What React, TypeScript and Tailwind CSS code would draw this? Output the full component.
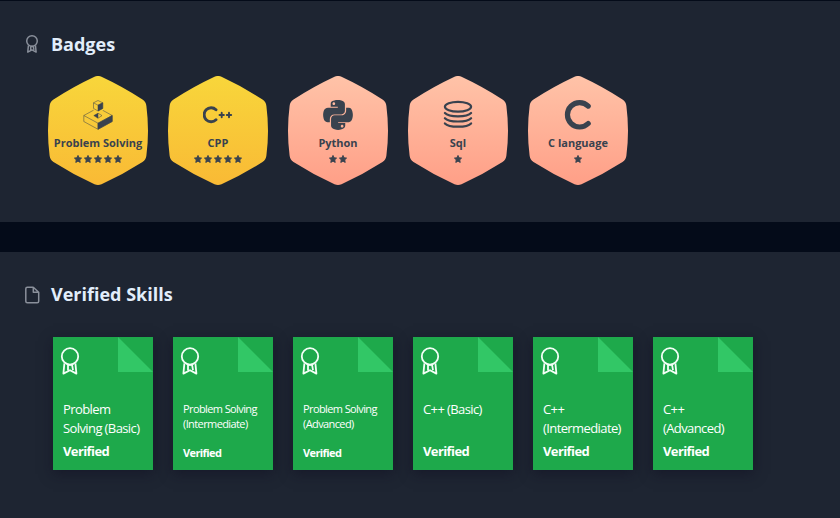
import type { ReactNode } from 'react';
import { FaPython } from 'react-icons/fa';

const INK = '#39424e';

function RibbonIcon({ className, strokeWidth }: { className: string; strokeWidth: number }) {
  return (
    <svg viewBox="0 0 20 28" className={className} fill="none" stroke="currentColor" strokeWidth={strokeWidth} strokeLinejoin="round">
      <circle cx="10" cy="9.4" r="8.2" />
      <path d="M4.4 16.4 3.4 26.6 10 23.2l6.4 3.4-1-10.2M8 17.6v5.6M12 17.6l1 5.6M8 17.8h4" />
    </svg>
  );
}

function FileIcon() {
  return (
    <svg viewBox="0 0 16 18" className="h-[18px] w-4 text-[#8a909b]" fill="none" stroke="currentColor" strokeWidth="1.5" strokeLinejoin="round">
      <path d="M9.300 1.300H3.300Q1.800 1.300 1.800 2.800v12.400q0 1.500 1.500 1.500h9.900q1.500 0 1.500-1.500V6.300L9.300 1.300v5h5.400" />
    </svg>
  );
}

function CubeIcon() {
  return (
    <svg viewBox="0 0 30 30" className="size-[30px]" fill="none" stroke={INK} strokeWidth="0.6" strokeOpacity="0.85" strokeLinejoin="round">
      <path d="M10.600 10.200.8 15.500v6L15 29.300l14.200-7.800v-6l-9.500-5.200M.8 15.500 15 23.200l14.200-7.700M15 23.200v6" />
      <path d="M15 23.200 29.200 15.500v6L15 29.300z" fill={INK} />
      <path d="m15 .5 4.700 2.300v5.600L15 11l-4.500-2.600V2.800zM10.500 2.800 15 5.200l4.700-2.400" />
      <path d="M15 5.200 19.700 2.800v5.600L15 11zM10.800 15.600 15 13.200v5z" fill={INK} />
      <path d="m15 13.200 4 2.400-4 2.600" />
    </svg>
  );
}

function CppIcon() {
  return (
    <svg viewBox="0 0 30 30" className="size-[30px]" fill="none" stroke={INK} strokeLinecap="round">
      <path d="M13 9.700a7 7 0 1 0 0 10.100" strokeWidth="2.900" />
      <path d="M16.500 15h4.400M18.700 12.800v4.400M23.800 15h4.400M26 12.800v4.400" strokeWidth="1.900" />
    </svg>
  );
}

function SqlIcon() {
  return (
    <svg viewBox="0 0 30 30" className="size-[30px]" fill="none" stroke={INK} strokeWidth="2.200" strokeLinecap="round">
      <ellipse cx="15" cy="6.700" rx="13.100" ry="4.900" />
      <path d="M1.900 13c4 4.400 22.200 4.400 26.200 0M1.900 18.200c4 4.400 22.200 4.400 26.200 0M1.900 23.400c4 4.400 22.200 4.400 26.200 0" />
    </svg>
  );
}

function CIcon() {
  return (
    <svg viewBox="0 0 30 30" className="size-[30px]" fill="none" stroke={INK} strokeWidth="5.200" strokeLinecap="round">
      <path d="M25.200 6.100a12.200 12.200 0 1 0 0 17.400" />
    </svg>
  );
}

function Star() {
  return (
    <svg viewBox="0 0 20 20" className="size-[8px]" fill={INK} stroke={INK} strokeWidth="2.200" strokeLinejoin="round">
      <path d="m10 1 2.800 5.900 6.200.8-4.600 4.400 1.200 6.600L10 15.400l-5.600 3.300 1.200-6.600L1 7.700l6.200-.8z" />
    </svg>
  );
}

type BadgeData = { name: string; stars: number; tone: 'gold' | 'bronze'; icon: ReactNode };

const badges: BadgeData[] = [
  { name: 'Problem Solving', stars: 5, tone: 'gold', icon: <CubeIcon /> },
  { name: 'CPP', stars: 5, tone: 'gold', icon: <CppIcon /> },
  { name: 'Python', stars: 2, tone: 'bronze', icon: <FaPython className="size-[34px] shrink-0" color={INK} /> },
  { name: 'Sql', stars: 1, tone: 'bronze', icon: <SqlIcon /> },
  { name: 'C language', stars: 1, tone: 'bronze', icon: <CIcon /> },
];

function Badge({ badge, id }: { badge: BadgeData; id: string }) {
  const gold = badge.tone === 'gold';
  return (
    <div className="relative h-[110px] w-[100px]">
      <svg viewBox="0 0 100 110" className="absolute inset-0 h-full w-full">
        <defs>
          <linearGradient id={id} x1="0" y1="0" x2="0" y2="1">
            <stop offset="0" stopColor={gold ? '#f8d63b' : '#ffc3a8'} />
            <stop offset="1" stopColor={gold ? '#f9ba35' : '#ff9f87'} />
          </linearGradient>
        </defs>
        <path
          fill={`url(#${id})`}
          d="M46.500 .800Q50-.900 53.500 .800Q75 10.800 94.500 23.600Q98 26 98.400 30Q101.600 55 98.400 79.500Q98 83.500 94.500 86Q75 98.500 53.500 108.300Q50 109.900 46.500 108.300Q25 98.500 5.500 86Q2 83.500 1.600 79.500Q-1.600 55 1.600 30Q2 26 5.500 23.600Q25 10.800 46.500 .800Z"
        />
      </svg>
      <div className="relative flex flex-col items-center pt-6 text-[#39424e]">
        <div className="flex h-[30px] items-center justify-center">{badge.icon}</div>
        <div className="mt-[5px] whitespace-nowrap text-[11px] leading-4 font-bold">{badge.name}</div>
        <div className="mt-[4px] flex gap-[1.8px]">
          {Array.from({ length: badge.stars }, (_, i) => (
            <Star key={i} />
          ))}
        </div>
      </div>
    </div>
  );
}

const skills = [
  { lines: ['Problem', 'Solving (Basic)'], small: false },
  { lines: ['Problem Solving', '(Intermediate)'], small: true },
  { lines: ['Problem Solving', '(Advanced)'], small: true },
  { lines: ['C++ (Basic)'], small: false },
  { lines: ['C++', '(Intermediate)'], small: false },
  { lines: ['C++', '(Advanced)'], small: false },
];

function SkillCard({ lines, small }: { lines: string[]; small: boolean }) {
  return (
    <div className="relative flex h-[133px] w-[100px] flex-col bg-[#1ea94b] pl-[10px] tracking-[-0.6px] text-white shadow-[0_4px_12px_rgba(16,14,34,0.5)]">
      <svg viewBox="0 0 35 35" className="absolute top-0 right-0 size-[35px]">
        <path d="M0 0 35 35H0z" fill="#32c766" />
      </svg>
      <RibbonIcon className="mt-[10px] -ml-[3px] h-7 w-5 text-[#f3fff6]" strokeWidth={1.8} />
      <div className={small ? 'mt-[26px] h-[40px] whitespace-nowrap text-[11px] leading-[15px]' : 'mt-[25px] h-[41px] whitespace-nowrap text-[13px] leading-[19px]'}>
        {lines.map((line) => (
          <div key={line}>{line}</div>
        ))}
      </div>
      <div className={small ? 'mt-[4px] text-[11px] leading-4 font-bold' : 'mt-[1px] text-[13px] leading-[19px] font-bold'}>Verified</div>
    </div>
  );
}

export default function App() {
  return (
    <div className="h-[518px] w-[840px] overflow-hidden bg-[#040b19] pt-px font-['Open_Sans',sans-serif]">
      <section className="h-[221px] bg-[#1e2532]">
        <header className="flex h-[75px] items-center gap-[11px] pt-[11px] pl-6">
          <div className="flex w-4 justify-center">
            <RibbonIcon className="h-[18px] w-[14px] text-[#8a909b]" strokeWidth={2.3} />
          </div>
          <h2 className="text-[18px] leading-6 font-bold text-[#e2eefb]">Badges</h2>
        </header>
        <div className="flex gap-5 pl-12">
          {badges.map((badge, i) => (
            <Badge key={badge.name} badge={badge} id={`badge-fill-${i}`} />
          ))}
        </div>
      </section>
      <section className="mt-[30px] h-[266px] bg-[#1e2532]">
        <header className="flex h-[85px] items-center gap-[11px] pl-6">
          <FileIcon />
          <h2 className="pb-[2px] text-[18px] leading-6 font-bold text-[#e2eefb]">Verified Skills</h2>
        </header>
        <div className="flex gap-5 pl-[53px]">
          {skills.map((skill, i) => (
            <SkillCard key={i} {...skill} />
          ))}
        </div>
      </section>
    </div>
  );
}
